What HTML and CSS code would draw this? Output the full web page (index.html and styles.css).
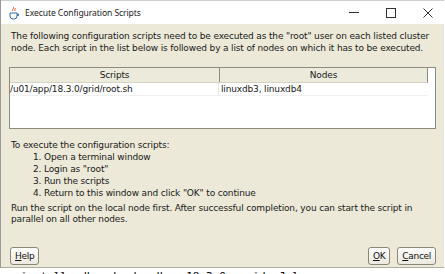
FILE: index.html
```html
<!DOCTYPE html>
<html lang="en">
<head>
    <meta charset="UTF-8">
    <title>Execute Configuration Scripts</title>
    <link rel="stylesheet" href="styles.css">
</head>
<body>
    <div class="window">
        <div class="titlebar">
            <svg class="app-icon" width="12" height="14" viewBox="0 0 12 14">
                <path d="M5 1c2 1-2 3 0 4M7 2c1 1-1 2 0 3" stroke="#d4531f" stroke-width="1" fill="none"/>
                <path d="M2 7h7v3a3 3 0 0 1-3 3h-1a3 3 0 0 1-3-3z" fill="none" stroke="#3b6ea5" stroke-width="1"/>
                <path d="M9 8h1.5v1.5H9" fill="none" stroke="#3b6ea5" stroke-width="1"/>
            </svg>
            <span class="title">Execute Configuration Scripts</span>
            <div class="controls">
                <span class="ctl ctl-min"></span>
                <span class="ctl ctl-max"></span>
                <svg class="ctl-close" width="10" height="10" viewBox="0 0 10 10">
                    <path d="M0.5 0.5l9 9M9.5 0.5l-9 9" stroke="#333" stroke-width="1"/>
                </svg>
            </div>
        </div>

        <div class="content">
            <p class="intro">The following configuration scripts need to be executed as the "root" user on each listed cluster node. Each script in the list below is followed by a list of nodes on which it has to be executed.</p>

            <div class="table-box">
                <div class="table-head">
                    <div class="th th-scripts">Scripts</div>
                    <div class="th th-nodes">Nodes</div>
                </div>
                <div class="table-row">
                    <div class="td td-scripts">/u01/app/18.3.0/grid/root.sh</div>
                    <div class="td td-nodes">linuxdb3, linuxdb4</div>
                </div>
            </div>

            <div class="steps">
                <p>To execute the configuration scripts:</p>
                <ol>
                    <li>Open a terminal window</li>
                    <li>Login as "root"</li>
                    <li>Run the scripts</li>
                    <li>Return to this window and click "OK" to continue</li>
                </ol>
            </div>

            <p class="note">Run the script on the local node first. After successful completion, you can start the script in parallel on all other nodes.</p>

            <div class="buttons">
                <button class="btn btn-help"><u>H</u>elp</button>
                <div class="right-buttons">
                    <button class="btn btn-ok"><u>O</u>K</button>
                    <button class="btn btn-cancel"><u>C</u>ancel</button>
                </div>
            </div>
        </div>
    </div>
    <div class="behind">oinstall  dba  backupdba  18.3.0  grid  Jul</div>
</body>
</html>
```

FILE: styles.css
```css
body {
    margin: 0;
    width: 445px;
    height: 274px;
    overflow: hidden;
    background-color: #ffffff;
    font-family: "DejaVu Sans", sans-serif;
}

.window {
    width: 444px;
    height: 268px;
    border-left: 1px solid #9a9a9a;
    border-bottom: 1px solid #b0ada0;
    display: flex;
    flex-direction: column;
    box-sizing: border-box;
}

.titlebar {
    height: 24px;
    background-color: #ffffff;
    display: flex;
    align-items: center;
    padding-left: 7px;
    border-top: 1px solid #d0d0d0;
    box-sizing: border-box;
}

.app-icon {
    margin-right: 5px;
}

.title {
    font-family: "Noto Sans", sans-serif;
    font-size: 8.6px;
    letter-spacing: -0.1px;
    color: #222;
}

.controls {
    margin-left: auto;
    display: flex;
    align-items: center;
    gap: 27px;
    padding-right: 11px;
}

.ctl-min {
    width: 10px;
    height: 1px;
    background-color: #333;
}

.ctl-max {
    width: 8px;
    height: 8px;
    border: 1px solid #333;
}

.content {
    flex: 1;
    background-color: #ece9d8;
    padding: 6px 8px 0 8px;
    display: flex;
    flex-direction: column;
    font-size: 9px;
    letter-spacing: -0.15px;
    color: #1a1a1a;
}

.content p {
    margin: 0;
}

.intro {
    line-height: 12px;
    padding-left: 2px;
}

.table-box {
    margin-top: 13px;
    height: 62px;
    background-color: #ffffff;
    border: 1px solid #8e8c7f;
    box-sizing: border-box;
    padding-right: 7px;
}

.table-head {
    display: flex;
    height: 14px;
    background-color: #ebeadb;
    border-bottom: 1px solid #d6d3c2;
    border-right: 1px solid #8e8c7f;
}

.th {
    text-align: center;
    line-height: 14px;
}

.th-scripts {
    width: 209px;
    border-right: 1px solid #8e8c7f;
}

.th-nodes {
    flex: 1;
}

.table-row {
    display: flex;
    height: 12px;
    border-bottom: 1px solid #f0f0f0;
}

.td {
    line-height: 12px;
}

.td-scripts {
    width: 208px;
    border-right: 1px solid #e8e8e8;
}

.td-nodes {
    padding-left: 2px;
}

.steps {
    margin-top: 10px;
    padding-left: 2px;
    line-height: 12px;
}

.steps ol {
    margin: 0;
    padding-left: 33px;
}

.note {
    margin-top: 4px !important;
    padding-left: 2px;
    line-height: 11px;
}

.buttons {
    margin-top: auto;
    margin-bottom: 2px;
    display: flex;
    align-items: center;
}

.right-buttons {
    margin-left: auto;
    display: flex;
    gap: 7px;
}

.btn {
    font-family: "DejaVu Sans", sans-serif;
    font-size: 9px;
    letter-spacing: -0.3px;
    height: 18px;
    padding: 0 4px;
    background: linear-gradient(#fdfdfb, #ece9e0);
    border: 1px solid #8a8778;
    border-radius: 3px;
    color: #111;
}

.btn-help {
    margin-left: 1px;
}

.behind {
    font-family: "DejaVu Sans Mono", monospace;
    font-size: 11px;
    line-height: 11px;
    color: #000;
    padding-left: 14px;
    padding-top: 3px;
    white-space: pre;
}
```
